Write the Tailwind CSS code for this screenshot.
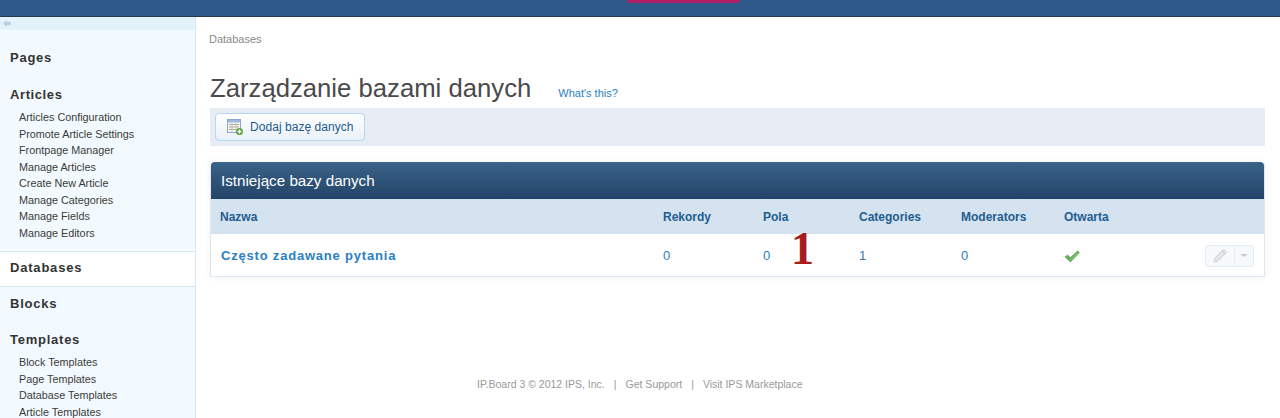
<!DOCTYPE html>
<html lang="en">
  <head>
    <meta charset="UTF-8" />
    <title>Databases</title>
    <script src="https://cdn.jsdelivr.net/npm/@tailwindcss/browser@4"></script>
  </head>
  <body class="h-[418px] overflow-hidden bg-white font-['Liberation_Sans',Arial,sans-serif] text-[11px] text-[#333]">
    <!-- top bar -->
    <header class="h-[17px] bg-[#2e5a8b] border-b border-[#23394f] flex justify-center">
      <div class="w-[113px] h-[3px] ml-[87px] bg-[#b01e66] rounded-b-sm"></div>
    </header>

    <div class="flex h-[401px]">
      <!-- sidebar -->
      <aside class="w-[196px] shrink-0 bg-[#f3faff] border-r border-[#d5e8f5] overflow-hidden">
        <div class="h-[13px] bg-[#e3f1fa] flex items-center pl-[3px]">
          <svg width="8" height="7" viewBox="0 0 8 7"><path d="M0 3.5 4 0v2h4v3H4v2z" fill="#b9cfdf" /></svg>
        </div>
        <h3 class="mt-[20px] pl-[10px] h-[16px] leading-[16px] text-[13px] font-bold tracking-[0.75px] text-[#333]">Pages</h3>
        <h3 class="mt-[21px] pl-[10px] h-[16px] leading-[16px] text-[13px] font-bold tracking-[0.6px] text-[#333]">Articles</h3>
        <ul class="mt-[6px] pl-[19px] leading-[16.5px] text-[10.8px] text-[#3a3a3a]">
          <li>Articles Configuration</li>
          <li>Promote Article Settings</li>
          <li>Frontpage Manager</li>
          <li>Manage Articles</li>
          <li>Create New Article</li>
          <li>Manage Categories</li>
          <li>Manage Fields</li>
          <li>Manage Editors</li>
        </ul>
        <div class="mt-[10px] h-[36px] bg-white border-y border-[#d5e8f5] pl-[10px] pb-[2px] flex items-center text-[13px] font-bold tracking-[0.8px] text-[#333]">Databases</div>
        <h3 class="mt-[9px] pl-[10px] h-[16px] leading-[16px] text-[13px] font-bold tracking-[0.75px] text-[#333]">Blocks</h3>
        <h3 class="mt-[20px] pl-[10px] h-[16px] leading-[16px] text-[13px] font-bold tracking-[0.75px] text-[#333]">Templates</h3>
        <ul class="mt-[6px] pl-[19px] leading-[16.5px] text-[10.8px] text-[#3a3a3a]">
          <li>Block Templates</li>
          <li>Page Templates</li>
          <li>Database Templates</li>
          <li>Article Templates</li>
        </ul>
      </aside>

      <!-- main -->
      <main class="flex-1 pl-[14px] pr-[15px]">
        <div class="mt-[15px] -ml-px h-[14px] leading-[14px] text-[#888]">Databases</div>
        <div class="mt-[27px] h-[30px] flex items-baseline">
          <h1 class="text-[25.7px] leading-[30px] text-[#4a4a4a]">Zarządzanie bazami danych</h1>
          <a class="ml-[27px] text-[#2b80c4]">What's this?</a>
        </div>

        <div class="mt-[5px] h-[38px] bg-[#e8ecf4] flex items-center pl-[5px]">
          <a class="w-[150px] h-[28px] rounded-[4px] border border-[#b5d6f0] bg-gradient-to-b from-white to-[#e9f1f8] flex items-center pl-[11px] gap-[7px] text-[12px] text-[#1d5a8e]">
            <svg width="16" height="16" viewBox="0 0 16 16">
              <rect x="0.5" y="0.5" width="13" height="13" fill="#f4f7fb" stroke="#8aa7cf" />
              <rect x="1" y="1" width="12" height="2.5" fill="#9db8dc" />
              <path d="M2 5.5h10M2 8h10M2 10.5h10" stroke="#c5a76a" stroke-width="1" />
              <path d="M5 4v9M9 4v9" stroke="#b6c8e0" stroke-width="1" />
              <circle cx="12.500" cy="12.500" r="3.500" fill="#5f9e3f" />
              <path d="M12.500 10.500v4M10.500 12.500h4" stroke="#fff" stroke-width="1.300" />
            </svg>
            <span class="tracking-[0.05px]">Dodaj bazę danych</span>
          </a>
        </div>

        <!-- table -->
        <section class="relative mt-[16px] rounded-t-[4px] border-x border-b border-[#dde8f3] shadow-[0_0_8px_rgba(0,0,0,0.06)]">
          <h2 class="h-[37px] rounded-t-[4px] bg-gradient-to-b from-[#3b6288] to-[#234468] flex items-center pl-[10px] pt-[2px] text-[15.2px] text-white">Istniejące bazy danych</h2>
          <div class="h-[35px] bg-[#d5e2f0] grid grid-cols-[443px_100px_96px_102px_103px_1fr] items-center pl-[9px] pt-[1px] text-[12px] font-bold text-[#225e8f]">
            <span>Nazwa</span>
            <span>Rekordy</span>
            <span>Pola</span>
            <span>Categories</span>
            <span>Moderators</span>
            <span>Otwarta</span>
          </div>
          <div class="h-[42px] bg-white grid grid-cols-[442px_100px_96px_102px_103px_1fr] items-center pl-[10px] pt-[1px] text-[13px] text-[#2b80c4]">
            <a class="font-bold tracking-[0.8px]">Często zadawane pytania</a>
            <span>0</span>
            <span>0</span>
            <span class="text-[#3a7ab0]">1</span>
            <span>0</span>
            <div class="flex items-center justify-between pr-[10px]">
              <svg width="16" height="14" viewBox="0 0 16 14">
                <path d="M1 8 3.500 6 6.500 8.500 13.500 2 15.500 3.500 6.500 13z" fill="#62b356" stroke="#5a9a55" stroke-width="0.6" />
                <path d="M6.500 11 14 3.500" stroke="#8ccf7f" stroke-width="1" />
              </svg>
              <div class="flex w-[49px] h-[22px] rounded-[3px] border border-[#e3ebf3] bg-[#f6f9fb]">
                <div class="w-[29px] flex items-center justify-center border-r border-[#e3ebf3]">
                  <svg width="15" height="15" viewBox="0 0 15 15">
                    <path d="M1 14l1-4L10.500 1.500l3 3L5 13z" fill="#e6e6e6" stroke="#cfcfcf" />
                    <path d="M9 3l3 3" stroke="#cfcfcf" />
                  </svg>
                </div>
                <div class="flex-1 flex items-center justify-center">
                  <div class="w-0 h-0 border-x-[4px] border-x-transparent border-t-[3px] border-t-[#c8c8c8]"></div>
                </div>
              </div>
            </div>
          </div>
          <!-- annotation drawn over the table -->
          <span class="absolute left-[580px] top-[62px] font-['Liberation_Serif',serif] font-bold text-[46px] leading-[50px] text-[#a81c1c]">1</span>
        </section>

        <footer class="mt-[100px] pl-[267px] h-[14px] leading-[14px] text-[10.5px] text-[#999] flex">
          <span>IP.Board 3 © 2012 IPS, Inc.</span>
          <span class="mx-[9px]">|</span>
          <span>Get Support</span>
          <span class="mx-[9px]">|</span>
          <span>Visit IPS Marketplace</span>
        </footer>
      </main>
    </div>
  </body>
</html>
